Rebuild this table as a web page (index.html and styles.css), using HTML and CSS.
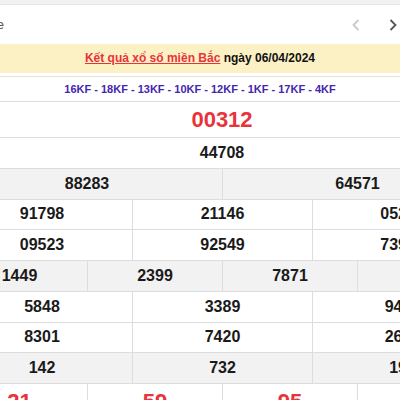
FILE: index.html
```
<!DOCTYPE html>
<html lang="vi">
<head>
<meta charset="utf-8">
<title>Kết quả xổ số miền Bắc</title>
<link rel="stylesheet" href="styles.css">
</head>
<body>
<div class="topband"></div>
<div class="bar">
  <div class="crumb"><span>Xổ số miền Bắc hôm nay Live</span></div>
  <div class="nav">
    <svg class="prev" width="8" height="12" viewBox="0 0 8 12"><path d="M6.5 1 L1.5 6 L6.5 11" fill="none" stroke="currentColor" stroke-width="1.8"/></svg>
    <svg class="next" width="8" height="12" viewBox="0 0 8 12"><path d="M1.5 1 L6.5 6 L1.5 11" fill="none" stroke="currentColor" stroke-width="1.8"/></svg>
  </div>
</div>
<div class="title"><a href="#">Kết quả xổ số miền Bắc</a> ngày 06/04/2024</div>
<div class="codes">16KF - 18KF - 13KF - 10KF - 12KF - 1KF - 17KF - 4KF</div>
<div class="viewport">
  <div class="table">
    <div class="r c1 big"><span>00312</span></div>
    <div class="r c1"><span>44708</span></div>
    <div class="r c2 g"><span>88283</span><span>64571</span></div>
    <div class="r c3"><span>91798</span><span>21146</span><span>05212</span></div>
    <div class="r c3"><span>09523</span><span>92549</span><span>73914</span></div>
    <div class="r c4 g"><span>1449</span><span>2399</span><span>7871</span><span>9031</span></div>
    <div class="r c3"><span>5848</span><span>3389</span><span>9461</span></div>
    <div class="r c3"><span>8301</span><span>7420</span><span>2657</span></div>
    <div class="r c3 g"><span>142</span><span>732</span><span>195</span></div>
    <div class="r c4 big"><span>21</span><span>59</span><span>95</span><span>47</span></div>
  </div>
</div>
</body>
</html>
```
FILE: styles.css
```
* { box-sizing: border-box; margin: 0; padding: 0; }
html, body {
  width: 400px;
  height: 400px;
  overflow: hidden;
  background: #fff;
  font-family: "Liberation Sans", Arial, sans-serif;
}
.topband {
  height: 5px;
  background: #f1f1f1;
  border-bottom: 1px solid #e6e6e6;
}
.bar {
  height: 39px;
  display: flex;
  align-items: center;
  justify-content: space-between;
}
.crumb {
  width: 4px;
  display: flex;
  justify-content: flex-end;
  white-space: nowrap;
  font-size: 13px;
  color: #555;
}
.nav {
  display: flex;
  align-items: center;
  gap: 29px;
  padding-right: 3px;
}
.nav svg { display: block; }
.prev { color: #c9c9c9; }
.next { color: #555; }
.title {
  height: 29px;
  line-height: 29px;
  background: #fcf1c4;
  text-align: center;
  font-size: 12px;
  font-weight: bold;
  color: #111;
  margin-bottom: 3px;
}
.title a {
  color: #e8333a;
  text-decoration: underline;
}
.codes {
  height: 26px;
  line-height: 25px;
  border-top: 1px solid #e2e2e2;
  border-bottom: 1px solid #ddd;
  text-align: center;
  font-size: 11px;
  font-weight: bold;
  color: #4326b0;
}
.viewport {
  overflow: hidden;
}
.table {
  width: 540px;
  margin-left: -48px;
}
.r {
  display: grid;
  height: 30.75px;
  border-bottom: 1px solid #ddd;
  font-size: 16px;
  font-weight: bold;
  color: #1a1a1a;
}
.r > span {
  display: flex;
  align-items: center;
  justify-content: center;
  border-left: 1px solid #ddd;
}
.r > span:first-child { border-left: none; }
.c1 { grid-template-columns: 1fr; }
.c2 { grid-template-columns: repeat(2, 1fr); }
.c3 { grid-template-columns: repeat(3, 1fr); }
.c4 { grid-template-columns: repeat(4, 1fr); }
.g { background: #f2f2f2; }
.big {
  height: 36px;
  font-size: 22px;
  color: #e8333a;
}
```
